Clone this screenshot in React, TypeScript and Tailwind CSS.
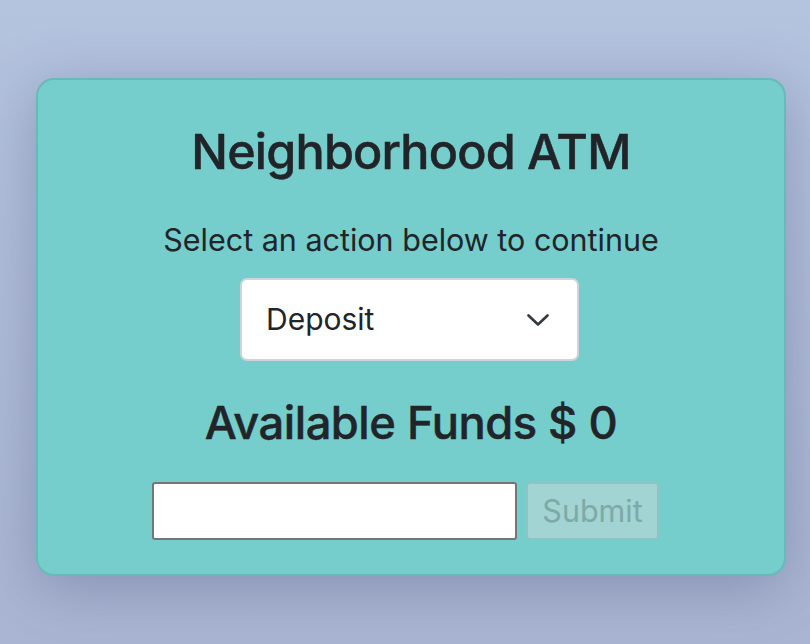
import React, { useState } from 'react';

const font = { fontFamily: 'Inter, "Noto Sans", sans-serif' };

export default function App() {
  const [action, setAction] = useState('Deposit');
  const [amount, setAmount] = useState('');

  return (
    <div
      className="w-[810px] h-[644px] overflow-hidden bg-gradient-to-b from-[#b4c3de] to-[#a9b5d2] text-[#212529]"
      style={font}
    >
      <div className="ml-[36px] mt-[78px] w-[750px] h-[498px] rounded-[18px] border-2 border-[#66bbb8] bg-[#75cecb] shadow-[0_12px_60px_rgba(70,75,120,0.35)] flex flex-col items-center">
        <h1 className="mt-[42px] text-[48.5px] leading-[60px] font-medium tracking-[-0.8px] [-webkit-text-stroke:0.45px_#212529]">
          Neighborhood ATM
        </h1>

        <p className="mt-[35px] text-[30.5px] leading-[45px]">Select an action below to continue</p>

        <div className="relative mt-[16px] w-[339px] h-[83px] -ml-[3px]">
          <select
            value={action}
            onChange={(e) => setAction(e.target.value)}
            className="appearance-none w-full h-full rounded-[7px] border-2 border-[#ced4da] bg-white pl-[24px] text-[30px] text-[#212529] outline-none"
            style={font}
          >
            <option>Deposit</option>
            <option>Cash Back</option>
          </select>
          <svg
            className="pointer-events-none absolute left-[287px] top-[36px]"
            width="22"
            height="12"
            viewBox="0 0 22 12"
            fill="none"
          >
            <path d="M1.5 1.5 L11 10.5 L20.5 1.5" stroke="#343a40" strokeWidth="2.6" strokeLinecap="round" strokeLinejoin="round" />
          </svg>
        </div>

        <h2 className="mt-[34px] text-[45.3px] leading-[55px] font-medium tracking-[-0.5px] [-webkit-text-stroke:0.45px_#212529]">
          Available Funds $ 0
        </h2>

        <div className="mt-[32px] flex gap-[9px] pr-[11px]">
          <input
            type="number"
            value={amount}
            onChange={(e) => setAmount(e.target.value)}
            className="w-[365px] h-[58px] rounded-[3px] border-2 border-[#767676] bg-white px-2 text-[24px] outline-none"
          />
          <button
            disabled
            className="w-[133px] h-[58px] rounded-[4px] border-2 border-[#8cc5c3] bg-[#a1d4d2] text-[30.5px] text-[#7fa9a7]"
            style={font}
          >
            Submit
          </button>
        </div>
      </div>
    </div>
  );
}
